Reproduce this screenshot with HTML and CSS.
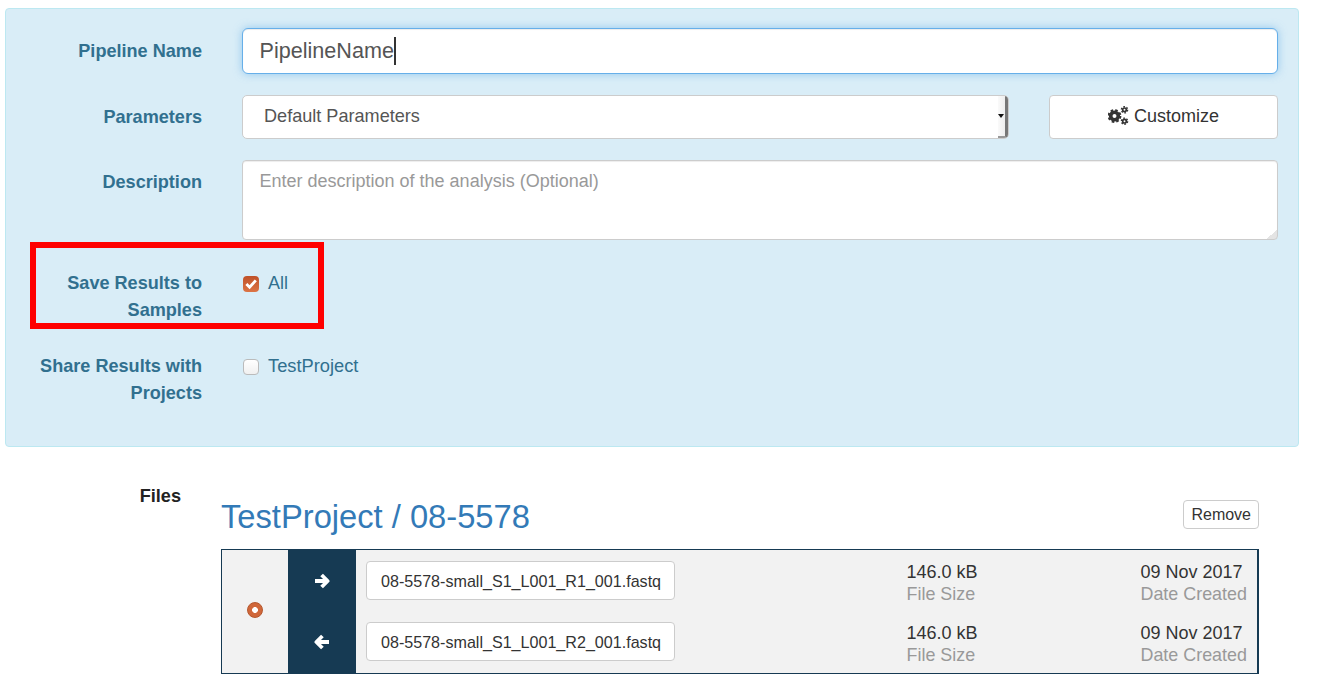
FILE: index.html
```html
<!DOCTYPE html>
<html lang="en">
<head>
    <meta charset="UTF-8">
    <title>Launch Pipeline</title>
    <link rel="stylesheet" href="styles.css">
</head>
<body>
    <form class="panel">
        <div class="row row-name">
            <label class="row-label">Pipeline Name</label>
            <div class="row-body">
                <div class="name-input">PipelineName<span class="caret"></span></div>
            </div>
        </div>
        <div class="row row-params">
            <label class="row-label">Parameters</label>
            <div class="row-body params-body">
                <div class="select-box">
                    <span>Default Parameters</span>
                    <span class="select-arrow"></span>
                </div>
                <button type="button" class="customize">
                    <svg class="gears" viewBox="0 0 21 19" width="21" height="19">
                        <circle cx="6.5" cy="10" r="3.8" fill="none" stroke="#333" stroke-width="3.6"/>
                        <circle cx="6.5" cy="10" r="5.9" fill="none" stroke="#333" stroke-width="2" stroke-dasharray="2.6 2.03"/>
                        <circle cx="16.5" cy="3.8" r="1.8" fill="none" stroke="#333" stroke-width="1.7"/>
                        <circle cx="16.5" cy="3.8" r="3.1" fill="none" stroke="#333" stroke-width="1.4" stroke-dasharray="1.7 1.55"/>
                        <circle cx="16.5" cy="15.2" r="1.8" fill="none" stroke="#333" stroke-width="1.7"/>
                        <circle cx="16.5" cy="15.2" r="3.1" fill="none" stroke="#333" stroke-width="1.4" stroke-dasharray="1.7 1.55"/>
                    </svg>
                    Customize
                </button>
            </div>
        </div>
        <div class="row row-desc">
            <label class="row-label">Description</label>
            <div class="row-body">
                <textarea class="desc-input" placeholder="Enter description of the analysis (Optional)"></textarea>
            </div>
        </div>
        <div class="row row-check">
            <label class="row-label">Save Results to Samples</label>
            <div class="row-body check-line">
                <span class="check checked">
                    <svg viewBox="0 0 16 16" width="16" height="16"><path d="M3.4 8 6.6 11.2 12.8 4.4" fill="none" stroke="#fff" stroke-width="2.8"/></svg>
                </span>
                <span>All</span>
            </div>
        </div>
        <div class="row row-check row-share">
            <label class="row-label">Share Results with Projects</label>
            <div class="row-body check-line">
                <span class="check"></span>
                <span class="check-text">TestProject</span>
            </div>
        </div>
    </form>
    <div class="highlight"></div>

    <div class="files">
        <div class="files-label">Files</div>
        <div class="files-body">
            <div class="sample-head">
                <h2>TestProject / 08-5578</h2>
                <button type="button" class="remove">Remove</button>
            </div>
            <div class="sample">
                <div class="radio-col"><span class="radio"></span></div>
                <div class="arrow-col">
                    <svg viewBox="0 0 16 16" width="16" height="16"><path d="M1 8H13M7.6 2 13.6 8 7.6 14" fill="none" stroke="#fff" stroke-width="3.8" stroke-linejoin="round"/></svg>
                    <svg viewBox="0 0 16 16" width="16" height="16"><path d="M15 8H3M8.4 2 2.4 8 8.4 14" fill="none" stroke="#fff" stroke-width="3.8" stroke-linejoin="round"/></svg>
                </div>
                <div class="file-rows">
                    <div class="file-row">
                        <div class="file-name">08-5578-small_S1_L001_R1_001.fastq</div>
                        <div class="stat stat-size"><div>146.0 kB</div><small>File Size</small></div>
                        <div class="stat stat-date"><div>09 Nov 2017</div><small>Date Created</small></div>
                    </div>
                    <div class="file-row">
                        <div class="file-name">08-5578-small_S1_L001_R2_001.fastq</div>
                        <div class="stat stat-size"><div>146.0 kB</div><small>File Size</small></div>
                        <div class="stat stat-date"><div>09 Nov 2017</div><small>Date Created</small></div>
                    </div>
                </div>
            </div>
        </div>
    </div>
</body>
</html>
```

FILE: styles.css
```css
html, body {
    height: 695px;
    overflow: hidden;
}
body {
    font-family: "Liberation Sans", Arial, sans-serif;
    font-size: 18px;
    line-height: 27px;
    color: #333;
    background: #fff;
    margin: 0;
    padding: 8px 28px 0 5px;
    position: relative;
}
* {
    box-sizing: border-box;
}
.panel {
    height: 439px;
    padding-top: 19px;
    background: #d9edf7;
    border: 1px solid #bce8f1;
    border-radius: 4px;
}
.row {
    display: flex;
    color: #31708f;
    margin-bottom: 21px;
    padding-right: 20px;
}
.row-label {
    width: 196px;
    margin-right: 40px;
    text-align: right;
    font-size: 18.1px;
    font-weight: bold;
    flex-shrink: 0;
}
.row-body {
    flex: 1;
}
.row-name .row-label {
    padding-top: 10px;
}
.row-params .row-label {
    padding-top: 9px;
}
.row-desc .row-label {
    padding-top: 9px;
}
.name-input {
    height: 46px;
    padding: 8px 17px 8px 16.5px;
    font-size: 21.6px;
    color: #555;
    background: #fff;
    border: 1px solid #66afe9;
    border-radius: 6px;
    box-shadow: inset 0 1px 1px rgba(0, 0, 0, .075), 0 0 8px rgba(102, 175, 233, .6);
}
.caret {
    display: inline-block;
    width: 2px;
    height: 28px;
    background: #333;
    vertical-align: -7px;
}
.params-body {
    display: flex;
    justify-content: space-between;
}
.select-box {
    width: 767px;
    height: 44px;
    display: flex;
    justify-content: space-between;
    padding-left: 21px;
    padding-top: 7px;
    font-size: 18.1px;
    color: #555;
    background: #fff;
    border: 1px solid #ccc;
    border-radius: 5px;
    position: relative;
    overflow: hidden;
}
.select-arrow {
    position: absolute;
    top: 0;
    right: 0;
    bottom: 0;
    width: 10px;
    background: linear-gradient(to right, #fafafa, #eee);
    border-right: 3px solid #777;
    border-bottom: 2px solid #999;
}
.select-arrow::after {
    content: "";
    position: absolute;
    left: 0;
    top: 18px;
    border-left: 3.5px solid transparent;
    border-right: 3.5px solid transparent;
    border-top: 4px solid #111;
}
.customize {
    width: 229px;
    height: 44px;
    padding: 0 0 2px;
    font: inherit;
    color: #333;
    background: #fff;
    border: 1px solid #ccc;
    border-radius: 4px;
}
.gears {
    vertical-align: -3px;
}
.desc-input {
    display: block;
    width: 100%;
    height: 80px;
    padding: 7px 17px 6px 16.5px;
    font: inherit;
    background: linear-gradient(135deg, transparent 50%, #e4e4e4 50%) no-repeat right bottom / 10px 10px #fff;
    border: 1px solid #ccc;
    border-radius: 4px;
    box-shadow: inset 0 1px 1px rgba(0, 0, 0, .075);
    resize: none;
}
.desc-input::placeholder {
    color: #999;
    opacity: 1;
}
.row-check {
    margin-top: 30px;
    margin-bottom: 0;
}
.row-share {
    margin-top: 29px;
}
.check-line {
    display: flex;
    align-items: flex-start;
    gap: 9px;
    padding-left: 1px;
}
.check-text {
    margin-top: -1px;
    font-size: 18.3px;
}
.check {
    width: 16px;
    height: 16px;
    margin-top: 6px;
    background: linear-gradient(#fff, #f0f0f0);
    border: 1px solid #bbb;
    border-radius: 4px;
}
.check.checked {
    background: linear-gradient(#bf5128, #dc7445);
    border: 0;
}
.check svg {
    display: block;
}
.highlight {
    position: absolute;
    left: 30px;
    top: 242px;
    width: 294px;
    height: 87px;
    border: 6px solid #f00;
}
.files {
    display: flex;
    margin-top: 36px;
}
.files-label {
    width: 176px;
    margin-right: 40px;
    text-align: right;
    font-size: 18.1px;
    font-weight: bold;
    color: #222;
}
.files-body {
    width: 1038px;
}
.sample-head {
    display: flex;
    justify-content: space-between;
    align-items: flex-end;
    height: 61px;
    margin-top: 5px;
}
.sample-head h2 {
    margin: 0 0 14px;
    font-size: 32.7px;
    font-weight: normal;
    line-height: 36px;
    color: #337ab7;
}
.remove {
    height: 29px;
    padding: 0 7px;
    margin-bottom: 20px;
    font: inherit;
    font-size: 16px;
    color: #333;
    background: #fff;
    border: 1px solid #ccc;
    border-radius: 4px;
}
.sample {
    display: flex;
    height: 125px;
    background: #f2f2f2;
    border: 1px solid #163a53;
    border-right-width: 2px;
}
.radio-col {
    width: 66px;
    display: flex;
    justify-content: center;
    align-items: center;
}
.radio {
    width: 16px;
    height: 16px;
    margin-bottom: 3px;
    border: 1px solid #b5562c;
    border-radius: 50%;
    background: radial-gradient(circle, #fff 2.6px, #d0673a 3.2px);
}
.arrow-col {
    width: 68px;
    padding: 23px 0;
    background: #163a53;
    display: flex;
    flex-direction: column;
    justify-content: space-between;
    align-items: center;
}
.file-rows {
    flex: 1;
}
.file-row {
    display: flex;
    height: 61px;
    padding-top: 11px;
    padding-left: 10px;
}
.file-name {
    width: 309px;
    height: 39px;
    padding: 6px 14px;
    font-size: 16.1px;
    white-space: nowrap;
    overflow: hidden;
    background: #fff;
    border: 1px solid #ccc;
    border-radius: 4px;
}
.stat {
    line-height: 22px;
    white-space: nowrap;
}
.stat small {
    display: block;
    font-size: 17.9px;
    color: #999;
}
.stat-size {
    margin-left: 231.5px;
    width: 234px;
}
```
